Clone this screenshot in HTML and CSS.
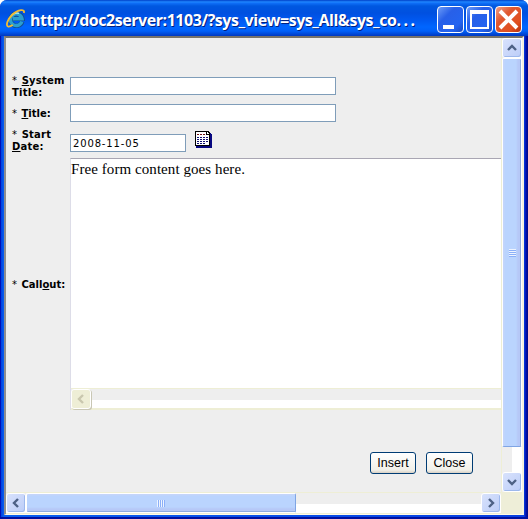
FILE: index.html
```html
<!DOCTYPE html>
<html lang="en">
<head>
<meta charset="utf-8">
<title>http://doc2server:1103/</title>
<link rel="stylesheet" href="styles.css">
</head>
<body>
<div class="window">
  <header class="titlebar">
    <svg class="ie" width="21" height="20" viewBox="0 0 21 20">
      <path d="M16.2 12.5A6 6 0 1 1 16.4 9.8H7" fill="none" stroke="#124f91" stroke-width="4.6"/>
      <path d="M15.8 12.5A5.8 5.8 0 1 1 16 9.8H7" fill="none" stroke="#2b9fcf" stroke-width="3.4"/>
      <path d="M6 6.3Q9 3 13 4.4" fill="none" stroke="#a8edff" stroke-width="1.5"/>
      <path d="M17.8 4C19.5-.5 12 .2 6.5 5.5C1 10.8-.2 16.5 2 17.5Q3.6 18.1 6.8 16" fill="none" stroke="#f2bb32" stroke-width="1.8"/>
    </svg>
    <h1 class="caption">http://doc2server:1103/?sys_view=sys_All&amp;sys_co<span class="dots">...</span></h1>
    <div class="controls">
      <span class="control"><svg viewBox="0 0 27 27"><path d="M6 21H17" stroke="#fff" stroke-width="4"/></svg></span>
      <span class="control"><svg viewBox="0 0 27 27"><path d="M4 6H23" stroke="#fff" stroke-width="4"/><path d="M5 6V22H22V6" fill="none" stroke="#fff" stroke-width="2"/></svg></span>
      <span class="control control-close"><svg viewBox="0 0 27 27"><path d="M5 5L22 22M22 5L5 22" stroke="#fff" stroke-width="4"/></svg></span>
    </div>
  </header>
  <div class="client">
    <main class="page">
      <form class="form">
        <label class="label"><span class="star">*</span> <u>S</u>ystem<br>Title:</label>
        <div class="field"></div>
        <label class="label label-title"><span class="star">*</span> <u>T</u>itle:</label>
        <div class="field field-title"></div>
        <label class="label label-date"><span class="star">*</span> Start<br><u>D</u>ate:</label>
        <div class="date-row">
          <div class="field field-date">2008-11-05</div>
          <svg class="calendar" width="18" height="18" viewBox="0 0 18 18" shape-rendering="crispEdges">
            <path d="M1 1H15L17 4V17H1Z" fill="#080880"/>
            <path d="M0 0H13L15 2V15H0Z" fill="#000"/>
            <path d="M1 1H11V4H14V14H1Z" fill="#fff"/>
            <path d="M12 1H13V2H14V3H12Z" fill="#fff"/>
            <path d="M2 3.5H11" stroke="#701010" stroke-dasharray="2 1"/>
            <path d="M2 6.5H13M2 8.5H13M2 10.5H13M2 12.5H11" stroke="#101070" stroke-dasharray="2 1"/>
          </svg>
        </div>
        <label class="label label-callout"><span class="star">*</span> Call<u>o</u>ut:</label>
        <div class="editor">
          <p class="editor-text">Free form content goes here.</p>
          <div class="editor-scroll">
            <span class="arrow arrow-disabled"><svg width="8" height="10" viewBox="0 0 8 10"><path d="M6 1L2 5L6 9" fill="none" stroke="#c9c7ae" stroke-width="2.4"/></svg></span>
          </div>
        </div>
      </form>
      <div class="actions"><button class="button">Insert</button><button class="button button-close">Close</button></div>
    </main>
    <div class="vscroll">
      <span class="arrow"><svg width="10" height="8" viewBox="0 0 10 8"><path d="M1 6L5 2L9 6" fill="none" stroke="#4d6185" stroke-width="2.4"/></svg></span>
      <span class="thumb thumb-v"><i class="grip grip-v"></i></span>
      <span class="arrow"><svg width="10" height="8" viewBox="0 0 10 8"><path d="M1 2L5 6L9 2" fill="none" stroke="#4d6185" stroke-width="2.4"/></svg></span>
    </div>
    <div class="hscroll">
      <span class="arrow"><svg width="8" height="10" viewBox="0 0 8 10"><path d="M6 1L2 5L6 9" fill="none" stroke="#4d6185" stroke-width="2.4"/></svg></span>
      <span class="thumb thumb-h"><i class="grip grip-h"></i></span>
      <span class="arrow"><svg width="8" height="10" viewBox="0 0 8 10"><path d="M2 1L6 5L2 9" fill="none" stroke="#4d6185" stroke-width="2.4"/></svg></span>
    </div>
    <div class="corner"></div>
  </div>
</div>
</body>
</html>
```
FILE: styles.css
```css
* { box-sizing: border-box; }
body { margin: 0; background: #fff; overflow: hidden; }
.window {
  width: 528px; height: 519px; padding: 0 4px 4px; overflow: hidden;
  display: flex; flex-direction: column;
  border-radius: 7px 7px 0 0;
  background: linear-gradient(90deg, #0010b8 0, #0010b8 1px, #0040e0 1px, #0860f0 4px, #0840e0 524px, #0010b0 526px, #000880 528px);
  box-shadow: inset 0 -2px #0010a0;
}
.titlebar {
  height: 36px; margin: 0 -4px; padding: 6px 5px 0 6px; flex: none;
  display: flex; align-items: flex-start;
  background: linear-gradient(#0040c8 0, #2088ff 2px, #1070f8 3px, #0058e0 6px, #0050e0 13px, #0058f0 20px, #0066ff 27px, #0060f8 31px, #0038c0 36px);
}
.ie { margin-top: 3px; flex: none; }
.caption {
  margin: 3px 0 0 3px; width: 407px; flex: none; white-space: nowrap;
  font: 700 16px/23px "Open Sans", sans-serif; letter-spacing: -.45px;
  color: #fff; text-shadow: 1px 1px #002080;
}
.dots { letter-spacing: 2.5px; }
.controls { display: flex; gap: 2px; }
.control {
  width: 27px; height: 27px; border: 1px solid #fff; border-radius: 4px;
  background: linear-gradient(135deg, #6c9cf8 0, #2860e8 35%, #2464f0 75%, #1848c0 100%);
}
.control svg { display: block; width: 27px; height: 27px; margin: -1px; }
.control-close { background: linear-gradient(135deg, #f0a088 0, #e05830 35%, #e05020 75%, #b03010 100%); }
.client {
  flex: 1; min-height: 0; display: grid; background: #eeeed8;
  grid-template-columns: 495px 21px; grid-template-rows: 454px 22px;
  border: solid; border-width: 2px 2px 1px 2px;
  border-color: #77736a #f4f2df #fffbe8 #8d8d91;
}
.page { background: #eee; overflow: hidden; }
.form {
  padding: 37px 0 0 6px; display: grid;
  grid-template-columns: 58px 431px; grid-template-rows: 28px 27px 28px 252px;
}
.label { font: bold 10px/12px "DejaVu Sans", sans-serif; letter-spacing: .2px; color: #000; white-space: nowrap; }
.star { font-weight: 400; letter-spacing: 1px; }
.label u { text-decoration: underline; text-underline-offset: 1px; text-decoration-thickness: 1px; }
.label-title { padding-top: 5px; letter-spacing: 0; }
.label-date { margin-top: -1px; }
.label-callout { padding-top: 121px; letter-spacing: 0; }
.field { width: 266px; height: 18px; margin-top: 2px; border: 1px solid #7f9db9; background: #fff; }
.field-title { margin-top: 1px; }
.date-row { display: flex; }
.field-date { width: 116px; margin-top: 4px; padding-left: 2px; font: 10px/17px "DejaVu Sans", sans-serif; letter-spacing: .85px; }
.calendar { margin: 1px 0 0 9px; }
.editor { border-top: 1px solid #a9a6b3; border-left: 1px solid #dddde8; background: #fff; display: flex; flex-direction: column; }
.editor-text { margin: 0; flex: 1; font: 15px/20px "Liberation Serif", serif; letter-spacing: .07px; color: #000; }
.editor-scroll { height: 22px; border-top: 1px solid #eeeed5; border-bottom: 2px solid #eeeed5; background: linear-gradient(#eee 11px, #fff 11px); display: flex; }
.arrow {
  width: 20px; height: 20px; flex: none; display: flex; align-items: center; justify-content: center;
  border: 1px solid #fff; border-radius: 3px;
  background: linear-gradient(135deg, #d8e2fc, #bccdf8); box-shadow: inset -1px -1px #9db8ec;
}
.arrow-disabled { background: #eeeed6; box-shadow: 1px 1px #c9c7b4; }
.actions { display: flex; gap: 10px; padding: 41px 0 0 364px; margin-top: 1px; }
.button {
  width: 46px; height: 22px; padding: 0; border: 1px solid #003c74; border-radius: 3px;
  font: 12.5px/18px "Liberation Sans", sans-serif; color: #000;
  background: linear-gradient(#fff, #f1f0e9 85%, #d8d0c4);
}
.button-close { width: 47px; }
.vscroll {
  display: flex; flex-direction: column; border-left: 1px solid #eeeed5;
  background: linear-gradient(90deg, #eee 10px, #fff 10px);
}
.vscroll .arrow:last-child { margin-top: auto; }
.thumb { display: flex; align-items: center; justify-content: center; border: 1px solid #fff; border-radius: 2px; flex: none; }
.thumb-v { width: 20px; height: 389px; background: linear-gradient(90deg, #c4d5fa 1px, #bad4fe 2px, #bad4fe 13px, #b6c8f7 15px, #b6c8f7 17px, #8facdf 17px); border-bottom: 1px solid #7fa5e4; }
.grip { display: block; }
.grip-v { width: 7px; height: 8px; background: repeating-linear-gradient(#eef4ff 0 1px, #8cb0f8 1px 2px); }
.hscroll { display: flex; border-top: 1px solid #eeeed5; border-bottom: 1px solid #eeeed5; background: linear-gradient(#eee 11px, #fff 11px); }
.hscroll .arrow:last-child { margin-left: auto; }
.thumb-h { width: 270px; height: 20px; background: linear-gradient(#c4d5fa 1px, #bad4fe 2px, #bad4fe 13px, #b6c8f7 15px, #b6c8f7 17px, #8facdf 17px); border-right: 1px solid #7fa5e4; }
.grip-h { width: 8px; height: 7px; background: repeating-linear-gradient(90deg, #eef4ff 0 1px, #8cb0f8 1px 2px); }
.corner { background: #eeeed8; }
```
